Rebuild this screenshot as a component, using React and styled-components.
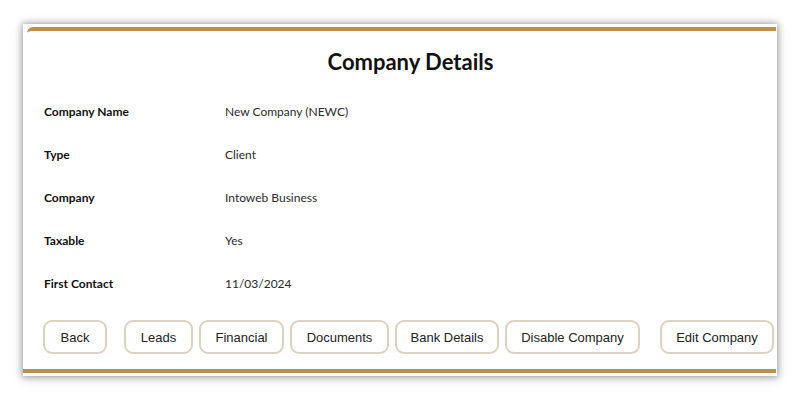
import React from "react";
import styled, { createGlobalStyle } from "styled-components";

const GlobalStyle = createGlobalStyle`
  html, body {
    margin: 0;
    padding: 0;
    background: #fff;
  }
  body {
    font-family: "Lato", "Liberation Sans", sans-serif;
  }
`;

const Page = styled.div`
  width: 800px;
  height: 400px;
  padding: 24px 23px 0 23px;
  box-sizing: border-box;
`;

const Frame = styled.div`
  width: 754px;
  height: 352px;
  background: #fff;
  box-sizing: border-box;
  padding: 3px 0 3px 0;
  box-shadow: 0 0 6px 1px rgba(0, 0, 0, 0.3), 0 2px 12px rgba(0, 0, 0, 0.18);
  display: flex;
`;

const Card = styled.div`
  flex: 1;
  min-width: 0;
  display: flex;
  flex-direction: column;
  border-top: 4px solid #b8914e;
  border-bottom: 4px solid #b8914e;
  border-top-left-radius: 6px;
  margin-left: 4px;
  margin-right: 1px;
  padding: 0 0 15px 16px;
  position: relative;
  &::after {
    content: "";
    position: absolute;
    left: -4px;
    bottom: -4px;
    width: 4px;
    height: 4px;
    background: #b8914e;
  }
`;

const Title = styled.h2`
  margin: 16px 0 0 0;
  height: 30px;
  line-height: 30px;
  text-align: center;
  font-size: 22px;
  font-weight: 700;
  color: #111;
  padding-left: 2px;
`;

const Rows = styled.div`
  margin-top: 13px;
  display: flex;
  flex-direction: column;
`;

const Row = styled.div`
  display: grid;
  grid-template-columns: 182px 1fr;
  align-items: center;
  height: 43px;
  font-size: 12px;
`;

const Label = styled.span`
  font-weight: 700;
  color: #111;
  padding-left: 1px;
`;

const Value = styled.span`
  color: #2a2a2a;
`;

const Actions = styled.div`
  display: flex;
  align-items: center;
  margin-top: 15px;
`;

const Button = styled.button`
  flex-shrink: 0;
  white-space: nowrap;
  width: ${(p) => p.$w}px;
  height: 34px;
  box-sizing: border-box;
  margin-left: ${(p) => p.$gap || 0}px;
  padding: 0;
  border: 2px solid #ddd1c4;
  border-radius: 9px;
  background: #fff;
  font-family: "Liberation Sans", Arial, sans-serif;
  font-size: 13px;
  color: #222;
  cursor: pointer;
`;

const details = [
  ["Company Name", "New Company (NEWC)"],
  ["Type", "Client"],
  ["Company", "Intoweb Business"],
  ["Taxable", "Yes"],
  ["First Contact", "11/03/2024"],
];

const buttons = [
  { label: "Back", gap: 0, w: 64 },
  { label: "Leads", gap: 17, w: 69 },
  { label: "Financial", gap: 6, w: 85 },
  { label: "Documents", gap: 6, w: 99 },
  { label: "Bank Details", gap: 6, w: 104 },
  { label: "Disable Company", gap: 6, w: 135 },
  { label: "Edit Company", gap: 20, w: 114 },
];

export default function App() {
  return (
    <>
      <GlobalStyle />
      <Page>
        <Frame>
          <Card>
            <Title>Company Details</Title>
            <Rows>
              {details.map(([label, value]) => (
                <Row key={label}>
                  <Label>{label}</Label>
                  <Value>{value}</Value>
                </Row>
              ))}
            </Rows>
            <Actions>
              {buttons.map((b) => (
                <Button key={b.label} $gap={b.gap} $w={b.w}>
                  {b.label}
                </Button>
              ))}
            </Actions>
          </Card>
        </Frame>
      </Page>
    </>
  );
}
